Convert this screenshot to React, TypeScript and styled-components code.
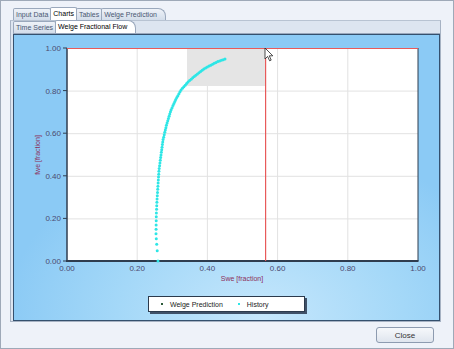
import styled, { createGlobalStyle } from "styled-components";

const GlobalStyle = createGlobalStyle`
  html, body {
    margin: 0;
    padding: 0;
    background: #eef2f9;
  }
  * {
    box-sizing: border-box;
  }
`;

// pixel points read off the history curve, bottom to top
const curvePoints: [number, number][] = [
  [157, 261],
  [156, 248],
  [155, 235],
  [155.3, 215],
  [156, 200],
  [157, 185],
  [158, 170],
  [160, 155],
  [162, 140],
  [165.5, 125],
  [170, 110],
  [175, 99],
  [180, 90],
  [187, 82],
  [195, 75],
  [202, 69.5],
  [210, 65],
  [217, 61.5],
  [224, 59],
];

// dots spread out where the curve is steep, bunch up near the top
const sampleCurve = (pts: [number, number][], count: number) => {
  const lens = [0];
  for (let i = 1; i < pts.length; i++) {
    const dx = pts[i][0] - pts[i - 1][0];
    const dy = pts[i][1] - pts[i - 1][1];
    lens.push(lens[i - 1] + Math.sqrt(dx * dx + dy * dy));
  }
  const total = lens[lens.length - 1];
  const out: [number, number][] = [];
  for (let k = 0; k < count; k++) {
    const d = total * Math.pow(k / (count - 1), 0.7);
    let i = 1;
    while (i < lens.length - 1 && lens[i] < d) i++;
    const t = (d - lens[i - 1]) / (lens[i] - lens[i - 1] || 1);
    out.push([
      pts[i - 1][0] + (pts[i][0] - pts[i - 1][0]) * t,
      pts[i - 1][1] + (pts[i][1] - pts[i - 1][1]) * t,
    ]);
  }
  return out;
};

const PLOT = { left: 66, right: 417, top: 48, bottom: 261 };
const xTicks = [0, 0.2, 0.4, 0.6, 0.8, 1.0];
const yTicks = [0, 0.2, 0.4, 0.6, 0.8, 1.0];
const px = (v: number) => PLOT.left + v * (PLOT.right - PLOT.left);
const py = (v: number) => PLOT.bottom - v * (PLOT.bottom - PLOT.top);

const App: React.FC = () => {
  const dots = sampleCurve(curvePoints, 85);

  return (
    <>
      <GlobalStyle />
      <Window>
        <TabRow>
          <Tab>Input Data</Tab>
          <Tab $active>Charts</Tab>
          <Tab>Tables</Tab>
          <Tab $slant>Welge Prediction</Tab>
        </TabRow>
        <TabPanel>
          <SubTabStrip>
            <Tab>Time Series</Tab>
            <Tab $active $slant>
              Welge Fractional Flow
            </Tab>
          </SubTabStrip>
          <ChartArea>
            <svg width={424} height={256} viewBox="14 35 424 256">
              <rect
                x={PLOT.left}
                y={PLOT.top}
                width={PLOT.right - PLOT.left}
                height={PLOT.bottom - PLOT.top}
                fill="#ffffff"
              />
              {xTicks.slice(1, -1).map((t) => (
                <line key={"gx" + t} x1={px(t)} x2={px(t)} y1={PLOT.top} y2={PLOT.bottom} stroke="#e2e2e2" strokeWidth={1} />
              ))}
              {yTicks.slice(1, -1).map((t) => (
                <line key={"gy" + t} x1={PLOT.left} x2={PLOT.right} y1={py(t) + 0.5} y2={py(t) + 0.5} stroke="#e2e2e2" strokeWidth={1} />
              ))}
              <rect x={186} y={49} width={78} height={37} fill="#e5e5e5" />
              {/* frame */}
              <line x1={PLOT.right} x2={PLOT.right} y1={PLOT.top} y2={PLOT.bottom} stroke="#2f3d4f" strokeWidth={1} />
              <line x1={PLOT.left} x2={PLOT.left} y1={PLOT.top} y2={PLOT.bottom + 1} stroke="#2f3d4f" strokeWidth={1.5} />
              <line x1={PLOT.left - 1} x2={PLOT.right + 0.5} y1={PLOT.bottom} y2={PLOT.bottom} stroke="#2f3d4f" strokeWidth={2} />
              {/* red cross lines */}
              <line x1={PLOT.left} x2={PLOT.right} y1={PLOT.top + 0.5} y2={PLOT.top + 0.5} stroke="#e85a5a" strokeWidth={1.2} />
              <rect x={264} y={PLOT.top} width={1.2} height={PLOT.bottom - PLOT.top} fill="#e85a5a" />
              {dots.map(([x, y], i) => (
                <circle key={i} cx={x} cy={y} r={1.5} fill="#2ee6e6" />
              ))}
              {/* y ticks + labels */}
              {yTicks.map((t) => (
                <g key={"ty" + t}>
                  <line x1={PLOT.left - 4} x2={PLOT.left} y1={py(t)} y2={py(t)} stroke="#2f3d4f" strokeWidth={1} />
                  <TickText x={PLOT.left - 6} y={py(t) + 3} textAnchor="end">
                    {t.toFixed(2)}
                  </TickText>
                </g>
              ))}
              {xTicks.map((t) => (
                <TickText key={"tx" + t} x={px(t)} y={271} textAnchor="middle">
                  {t.toFixed(2)}
                </TickText>
              ))}
              <AxisTitle x={241} y={281} textAnchor="middle">
                Swe [fraction]
              </AxisTitle>
              <AxisTitle x={39} y={155} textAnchor="middle" transform="rotate(-90 39 155)">
                fwe [fraction]
              </AxisTitle>
              {/* mouse pointer */}
              <path
                d="M264 48 L264 59 L266.6 56.4 L268.6 60.8 L270.2 60.1 L268.3 55.8 L271.8 55.8 Z"
                fill="#ffffff"
                stroke="#222"
                strokeWidth={0.8}
              />
            </svg>
            <Legend>
              <LegendItem>
                <Marker $color="#2d5a3a" />
                Welge Prediction
              </LegendItem>
              <LegendItem>
                <Marker $color="#2ee6e6" />
                History
              </LegendItem>
            </Legend>
          </ChartArea>
        </TabPanel>
        <Footer>
          <CloseButton>Close</CloseButton>
        </Footer>
      </Window>
    </>
  );
};

const Window = styled.div`
  width: 454px;
  height: 349px;
  border: 1px solid #9ea9b8;
  background: #eef2f9;
  padding: 7px 13px 0 9px;
  display: flex;
  flex-direction: column;
  font-family: "Liberation Sans", Arial, sans-serif;
`;

const TabRow = styled.div`
  display: flex;
  align-items: flex-end;
  height: 12px;
  padding-left: 3px;
`;

const Tab = styled.div<{ $active?: boolean; $slant?: boolean }>`
  height: ${(p) => (p.$active ? "13px" : "12px")};
  margin-top: ${(p) => (p.$active ? "-1px" : "0")};
  padding: 0 ${(p) => (p.$slant ? "8px" : "2px")} 0 2px;
  font-size: 7px;
  line-height: 12px;
  color: ${(p) => (p.$active ? "#000" : "#4a5872")};
  background: ${(p) =>
    p.$active ? "#ffffff" : "linear-gradient(#eef2f8, #d3ddea)"};
  border: 1px solid #9aa8bc;
  border-bottom: none;
  border-radius: 2px ${(p) => (p.$slant ? "8px" : "2px")} 0 0;
  margin-right: -1px;
  white-space: nowrap;
  position: relative;
  z-index: ${(p) => (p.$active ? 2 : 1)};
`;

const TabPanel = styled.div`
  width: 431px;
  height: 302px;
  border: 1px solid #a6b2c3;
  border-top-color: #b8c3d2;
  background: #dde5f0;
  padding: 0 0 0 2px;
  display: flex;
  flex-direction: column;
`;

const SubTabStrip = styled.div`
  display: flex;
  align-items: flex-end;
  height: 13px;
  border-bottom: 1px solid #9aa8bc;
`;

const ChartArea = styled.div`
  width: 427px;
  height: 287px;
  border: 1px solid #34506e;
  background: radial-gradient(
    ellipse 75% 80% at 58% 100%,
    #c6e7fc 0%,
    #a4d8f8 45%,
    #8bcaf5 80%
  ),
    #87c5f2;
  display: flex;
  flex-direction: column;
  align-items: center;
`;

const TickText = styled.text`
  font-family: "Liberation Sans", Arial, sans-serif;
  font-size: 8px;
  fill: #4b4a70;
`;

const AxisTitle = styled.text`
  font-family: "Liberation Sans", Arial, sans-serif;
  font-size: 7px;
  fill: #8c2f5a;
`;

const Legend = styled.div`
  margin-top: 5px;
  width: 157px;
  height: 16px;
  background: #ffffff;
  border: 1px solid #2c3a4c;
  box-shadow: 2px 2px 0 #3f5168;
  display: flex;
  align-items: center;
  gap: 15px;
  padding-left: 12px;
`;

const LegendItem = styled.div`
  display: flex;
  align-items: center;
  gap: 7px;
  font-size: 7px;
  color: #222;
`;

const Marker = styled.span<{ $color: string }>`
  width: 2px;
  height: 2px;
  background: ${(p) => p.$color};
`;

const Footer = styled.div`
  display: flex;
  justify-content: flex-end;
  padding: 5px 6px 0 0;
`;

const CloseButton = styled.button`
  width: 58px;
  height: 16px;
  padding: 0;
  border: 1px solid #8d9bb0;
  border-radius: 3px;
  background: linear-gradient(#f6f8fb, #dfe5ee);
  font-family: "Liberation Sans", Arial, sans-serif;
  font-size: 8px;
  color: #333;
`;

export default App;
